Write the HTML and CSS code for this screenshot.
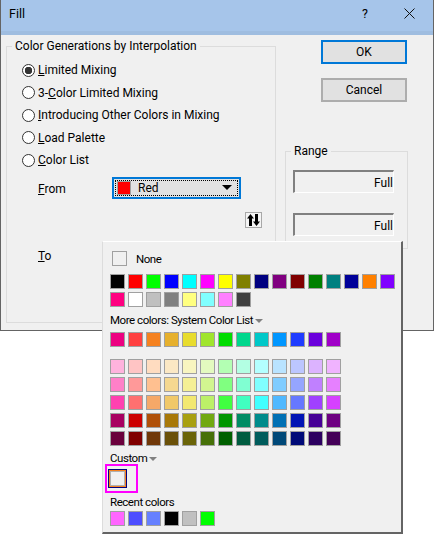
FILE: index.html
```html
<!DOCTYPE html>
<html lang="en">
<head>
    <meta charset="UTF-8">
    <meta name="viewport" content="width=device-width, initial-scale=1.0">
    <title>Fill</title>
    <link rel="stylesheet" href="styles.css">
</head>
<body>
    <div class="dialog">
        <div class="titlebar">
            <span class="title">Fill</span>
            <span class="help">?</span>
            <svg class="close" width="11" height="11" viewBox="0 0 11 11"><path d="M0.5 0.5L10.5 10.5M10.5 0.5L0.5 10.5" stroke="#111" fill="none"/></svg>
        </div>
        <div class="content">
            <fieldset class="group interp">
                <legend>Color Generations by Interpolation</legend>
                <div class="radio-list">
                    <div class="radio-row"><span class="radio checked"></span><span><u>L</u>imited Mixing</span></div>
                    <div class="radio-row"><span class="radio"></span><span>3-<u>C</u>olor Limited Mixing</span></div>
                    <div class="radio-row"><span class="radio"></span><span><u>I</u>ntroducing Other Colors in Mixing</span></div>
                    <div class="radio-row"><span class="radio"></span><span><u>L</u>oad Palette</span></div>
                    <div class="radio-row"><span class="radio"></span><span><u>C</u>olor List</span></div>
                </div>
                <div class="from-row">
                    <span class="field-label"><u>F</u>rom</span>
                    <div class="combo">
                        <span class="combo-inner">
                            <span class="combo-swatch"></span>
                            <span class="combo-text">Red</span>
                            <span class="combo-arrow"></span>
                        </span>
                    </div>
                </div>
                <div class="swap-row">
                    <button class="swap">
                        <svg width="13" height="12" viewBox="0 0 13 12"><path d="M3.5 0L7 4.5H5V12H2V4.5H0Z M9.5 12L6 7.5H8V0H11V7.5H13Z" fill="#000"/></svg>
                    </button>
                </div>
                <div class="to-row"><span class="field-label"><u>T</u>o</span></div>
            </fieldset>
            <div class="side">
                <button class="btn btn-ok">OK</button>
                <button class="btn">Cancel</button>
                <fieldset class="group range">
                    <legend>Range</legend>
                    <div class="range-box">Full</div>
                    <div class="range-box">Full</div>
                </fieldset>
            </div>
        </div>
    </div>

    <div class="popup">
        <div class="none-row"><span class="none-box"></span><span>None</span></div>
        <div class="swatches" data-colors="#000000 #ff0000 #00ff00 #0000ff #00ffff #ff00ff #ffff00 #808000 #000080 #800080 #800000 #008000 #008080 #000099 #ff8000 #8000ff #ff0080 #ffffff #c0c0c0 #808080 #ffff80 #80ffff #ff80ff #404040"></div>
        <div class="popup-label">More colors: System Color List<span class="tri"></span></div>
        <div class="swatches" data-colors="#ec0080 #ff4040 #f58220 #e6b02d #e8dc2d #a0e52d #00dc00 #00d78c #00c8c8 #0096ff #1e3cff #6a00dc #a000c8"></div>
        <div class="swatches shades" data-colors="#ffb3dd #ffc4c4 #ffdcc0 #fbe8c4 #f8f5c0 #e3fabf #b3ffb3 #b3ffe3 #b3ffff #b9e3ff #bcc6ff #dcb3ff #f0b3ff
            #ff80c8 #ff9999 #ffc090 #f5d890 #f5f095 #d2f590 #80ff80 #80ffd2 #80ffff #80ccff #95a5ff #c080ff #e680ff
            #ff40b0 #ff7070 #f5a868 #f0c868 #f2e870 #bcf068 #40ff40 #40ffc0 #40ffff #50b8ff #6678ff #a040ff #d640ff
            #a80060 #cc0000 #b05008 #a87808 #a8a010 #70a810 #009600 #008c64 #008c8c #0070b4 #0014b4 #460096 #6e0082
            #6a003c #800000 #703808 #6a5008 #6a6408 #467008 #006000 #005c40 #005c5c #004878 #000a78 #2c0060 #440058"></div>
        <div class="popup-label custom-label">Custom<span class="tri"></span></div>
        <div class="custom-mark"><span class="custom-swatch"></span></div>
        <div class="popup-label recent-label">Recent colors</div>
        <div class="swatches" data-colors="#ff66ff #4d4dff #6680ff #000000 #c0c0c0 #00ff00"></div>
    </div>
    <script src="script.js"></script>
</body>
</html>
```

FILE: styles.css
```css
html, body {
    margin: 0;
    padding: 0;
}

body {
    width: 434px;
    height: 539px;
    position: relative;
    overflow: hidden;
    background-color: #fff;
    font-family: Roboto, "Noto Sans", sans-serif;
    font-size: 12px;
    color: #000;
}

.dialog {
    box-sizing: border-box;
    width: 434px;
    height: 331px;
    background-color: #f0f0f0;
    border-left: 1px solid #646464;
    border-right: 1px solid #646464;
    border-bottom: 1px solid #646464;
}

.titlebar {
    display: flex;
    align-items: center;
    height: 35px;
    padding: 0 18px 5px 8px;
    box-sizing: border-box;
    background-color: #a6c5ea;
    border-bottom: 4px solid #9fbde0;
    font-size: 12.5px;
}

.title {
    flex: 1;
}

.help {
    margin-right: 36px;
}

.content {
    display: flex;
    align-items: flex-start;
    padding: 3px 0 0 5px;
}

.group {
    box-sizing: border-box;
    margin: 0;
    border: 1px solid #dcdcdc;
}

.group legend {
    padding: 0 3px;
    line-height: 17px;
}

.interp {
    width: 270px;
    height: 285px;
    padding: 0 0 0 15px;
}

.interp legend {
    margin-left: -10px;
}

.radio-list {
    display: flex;
    flex-direction: column;
    padding-top: 4px;
}

.radio-row {
    display: flex;
    align-items: center;
    gap: 3px;
    height: 22.5px;
}

.radio {
    box-sizing: border-box;
    width: 13px;
    height: 13px;
    border: 1px solid #333;
    border-radius: 50%;
    background-color: #fff;
}

.radio.checked {
    background: radial-gradient(circle, #333 0, #333 3.5px, #fff 4px);
}

.field-label {
    display: block;
    width: 74px;
    padding-left: 16px;
}

.from-row {
    display: flex;
    align-items: center;
    margin-top: 5px;
}

.from-row .field-label {
    padding-top: 3px;
}

.combo {
    box-sizing: border-box;
    width: 129px;
    height: 22px;
    padding: 1px;
    border: 2px solid #0078d7;
    background-color: #e1e1e1;
}

.combo-inner {
    box-sizing: border-box;
    display: flex;
    align-items: center;
    height: 100%;
    padding: 0 5px 0 1px;
    border: 1px dotted #000;
}

.combo-swatch {
    width: 12px;
    height: 12px;
    border: 1px solid #a0a0a0;
    background-color: #ff0000;
}

.combo-text {
    flex: 1;
    margin-left: 7px;
}

.combo-arrow {
    width: 0;
    height: 0;
    border-left: 5px solid transparent;
    border-right: 5px solid transparent;
    border-top: 5px solid #000;
}

.swap-row {
    display: flex;
    justify-content: flex-end;
    padding-right: 13px;
    margin-top: 13px;
}

.swap {
    box-sizing: border-box;
    display: flex;
    align-items: center;
    justify-content: center;
    width: 17px;
    height: 16px;
    padding: 0;
    border: 1px solid #a8a8a8;
    background-color: #f4f4f4;
}

.to-row {
    margin-top: 21px;
}

.side {
    display: flex;
    flex-direction: column;
    align-items: flex-start;
    margin-left: 9px;
}

.btn {
    box-sizing: border-box;
    width: 86px;
    height: 24px;
    margin: 2px 0 12px 36px;
    border: 2px solid #adadad;
    background-color: #e1e1e1;
    font: inherit;
    color: #000;
}

.btn-ok {
    border-color: #0078d7;
}

.range {
    width: 123px;
    height: 106px;
    margin-top: 29px;
    padding: 10px 0 0 7px;
}

.range legend {
    margin-left: -2px;
}

.range-box {
    box-sizing: border-box;
    width: 101px;
    height: 23px;
    margin-bottom: 20px;
    border-top: 2px solid #808080;
    border-left: 2px solid #808080;
    border-right: 1px solid #fff;
    border-bottom: 1px solid #fff;
    text-align: right;
    line-height: 22px;
}

/* colour picker dropped from the To combo */
.popup {
    position: absolute;
    left: 102px;
    top: 241px;
    box-sizing: border-box;
    width: 301px;
    height: 293px;
    padding: 9px 0 0 7px;
    background-color: #f0f0f0;
    border-top: 1px solid #fff;
    border-left: 1px solid #dcdcdc;
    border-right: 2px solid #646464;
    border-bottom: 2px solid #646464;
    font-size: 11.5px;
    letter-spacing: -0.45px;
}

.none-row {
    display: flex;
    align-items: center;
    gap: 9px;
    height: 15px;
    padding-left: 2px;
}

.none-box {
    box-sizing: border-box;
    width: 15px;
    height: 15px;
    border: 1px solid #a0a0a0;
}

.swatches {
    display: grid;
    grid-template-columns: repeat(16, 15px);
    gap: 3px;
    margin-top: 8px;
}

.swatch {
    box-sizing: border-box;
    width: 15px;
    height: 15px;
    border: 1px solid #a0a0a0;
}

.shades {
    grid-template-columns: repeat(13, 15px);
    margin-top: 12px;
}

.popup-label {
    display: flex;
    align-items: center;
    height: 18px;
    margin-top: 4px;
    margin-bottom: -5px;
}

.custom-label {
    margin-top: 3px;
    margin-bottom: -1px;
}

.recent-label {
    margin-top: 0;
    margin-bottom: -8px;
}

.tri {
    width: 0;
    height: 0;
    margin: 2px 0 0 2px;
    border-left: 4px solid transparent;
    border-right: 4px solid transparent;
    border-top: 4px solid #808080;
}

.custom-mark {
    box-sizing: border-box;
    width: 33px;
    height: 29px;
    margin: -3px 0 0 -5px;
    padding: 3px 0 0 1px;
    border: 2px solid #ff00ff;
}

.custom-swatch {
    display: block;
    box-sizing: border-box;
    width: 19px;
    height: 19px;
    border: 1px solid #000080;
    box-shadow: inset 0 0 0 1px #f58220, inset 0 0 0 2px #b0b0b0;
    background-color: #f0f0f0;
}
```

FILE: script.js
```js
document.querySelectorAll('.swatches').forEach(group => {
    group.dataset.colors.trim().split(/\s+/).forEach(color => {
        const swatch = document.createElement('span');
        swatch.className = 'swatch';
        swatch.style.backgroundColor = color;
        group.appendChild(swatch);
    });
});
```
